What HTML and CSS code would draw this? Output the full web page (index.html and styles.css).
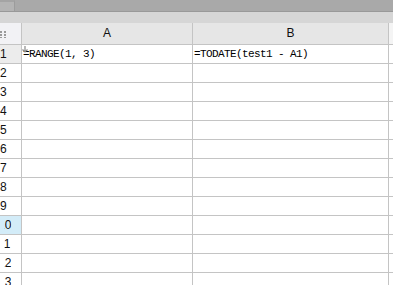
FILE: index.html
```html
<!DOCTYPE html>
<html>
<head>
    <link rel="stylesheet" href="styles.css">
</head>
<body>

<div class="tabs">
    <div class="tab-first"></div>
    <div class="tab-rest"></div>
</div>
<div class="strip"></div>

<div id="sheet" class="sheet">
    <div class="corner">
        <svg width="7" height="7" viewBox="0 0 7 7">
            <rect x="0" y="0" width="2" height="2" fill="#9a9a9a"/>
            <rect x="4" y="0" width="2" height="2" fill="#9a9a9a"/>
            <rect x="0" y="3" width="2" height="2" fill="#9a9a9a"/>
            <rect x="4" y="3" width="2" height="2" fill="#9a9a9a"/>
            <rect x="0" y="6" width="2" height="1" fill="#9a9a9a"/>
            <rect x="4" y="6" width="2" height="1" fill="#9a9a9a"/>
        </svg>
    </div>
    <div class="col-head">A</div>
    <div class="col-head">B</div>
    <div class="col-head last"></div>
</div>

<script>
    let cells = {
        1: ['=RANGE(1, 3)', '=TODATE(test1 - A1)']
    };

    function buildRows() {
        let sheet = document.getElementById('sheet');
        for (let r = 1; r <= 13; r++) {
            let head = document.createElement('div');
            head.classList.add('row-head');
            if (r == 1) head.classList.add('current');
            if (r == 10) head.classList.add('hover');
            let label = document.createElement('span');
            label.textContent = r;
            if (r >= 10) label.classList.add('wide');
            head.appendChild(label);
            sheet.appendChild(head);

            let values = cells[r] || ['', ''];
            for (let c = 0; c < 3; c++) {
                let cell = document.createElement('div');
                cell.classList.add('cell');
                if (c == 2) cell.classList.add('last');
                if (r == 1 && c == 0) {
                    cell.innerHTML = '<svg class="mark" width="6" height="7" viewBox="0 0 6 7"><path d="M3 0 V6 M0.5 3.5 L3 6 L5.5 3.5" stroke="#8a8a8a" stroke-width="1.2" fill="none"/></svg>';
                }
                if (c < 2 && values[c]) {
                    let text = document.createElement('span');
                    text.textContent = values[c];
                    cell.appendChild(text);
                }
                sheet.appendChild(cell);
            }
        }
    }

    buildRows();
</script>

</body>
</html>
```

FILE: styles.css
```css
body {
    margin: 0;
    padding: 0;
    background-color: #fff;
    font-family: "Liberation Sans", Arial, sans-serif;
    overflow: hidden;
}
.tabs {
    display: flex;
    height: 11px;
    border-bottom: 1px solid #999;
    background-color: #a9a9a9;
}
.tab-first {
    width: 15px;
    background-color: #b4b4b4;
    border-right: 1px solid #9c9c9c;
    border-top: 2px solid #a4a4a4;
    box-sizing: border-box;
}
.tab-rest {
    flex: 1;
}
.strip {
    height: 11px;
    background-color: #d6d6d6;
}
.sheet {
    display: grid;
    grid-template-columns: 22px 171px 196px 1fr;
    grid-auto-rows: 19px;
    grid-template-rows: 22px;
}
.corner, .col-head, .row-head, .cell {
    border-right: 1px solid #c4c4c4;
    border-bottom: 1px solid #c4c4c4;
    box-sizing: border-box;
    overflow: hidden;
}
.corner {
    background-color: #f2f2f5;
    display: flex;
    align-items: center;
    padding-top: 1px;
}
.col-head {
    background-color: #e6e6e6;
    font-size: 12px;
    color: #111;
    text-align: center;
    line-height: 21px;
}
.col-head.last {
    background-color: #f4f4f4;
}
.last {
    border-right: none;
}
.row-head {
    font-size: 12px;
    color: #111;
    line-height: 18px;
    white-space: nowrap;
    background-color: #fff;
}
.row-head.current {
    background-color: #ececec;
}
.row-head.hover {
    background-color: #d3ecf8;
}
.row-head .wide {
    display: inline-block;
    margin-left: -2px;
    clip-path: inset(0 0 0 6.5px);
}
.cell {
    position: relative;
    font-family: "Liberation Mono", "Courier New", monospace;
    font-size: 11px;
    letter-spacing: -0.6px;
    line-height: 18px;
    color: #000;
    padding-left: 1px;
    white-space: nowrap;
}
.mark {
    position: absolute;
    left: 0;
    top: 1px;
}
```
